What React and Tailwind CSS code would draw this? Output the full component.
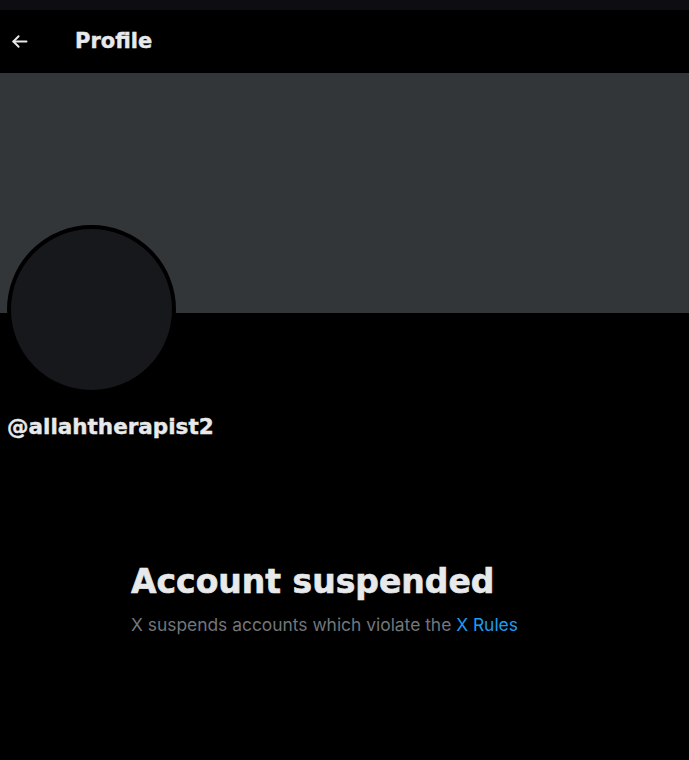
export default function App() {
  return (
    <div className="min-h-screen w-full bg-black text-[#e7e9ea]" style={{ fontFamily: "Inter, 'Noto Sans', sans-serif" }}>
      <div className="h-[10px] bg-[#0d0d12]" />
      <header className="flex h-[63px] items-center">
        <div className="flex w-[75px] items-center pl-[9px]">
          <svg width="21" height="21" viewBox="0 0 24 24" fill="none" stroke="#e7e9ea" strokeWidth="2.2" strokeLinecap="round" strokeLinejoin="round">
            <path d="M20 12H5" />
            <path d="M11 6l-6 6 6 6" />
          </svg>
        </div>
        <h1 className="font-['DejaVu_Sans',sans-serif] text-[21px] font-bold [-webkit-text-stroke:0.4px_#e7e9ea]">Profile</h1>
      </header>
      <div className="h-[240px] bg-[#333639]" />
      <div className="relative h-[80px]">
        <div className="absolute left-[7px] top-[-88px] h-[169px] w-[169px] rounded-full border-4 border-black bg-[#17181c]" />
      </div>
      <div className="px-[7px] pt-[20px] font-['DejaVu_Sans',sans-serif] text-[21.5px] font-bold leading-[28px] [-webkit-text-stroke:0.4px_#e7e9ea]">@allahtherapist2</div>
      <div className="pl-[131px] pt-[120px]">
        <h2 className="font-['DejaVu_Sans',sans-serif] text-[33px] font-bold leading-[42px] [-webkit-text-stroke:0.6px_#e7e9ea]">Account suspended</h2>
        <p className="mt-[11px] text-[17.4px] leading-[22px] text-[#71767b]">
          X suspends accounts which violate the <span className="text-[#1d9bf0]">X Rules</span>
        </p>
      </div>
    </div>
  );
}
